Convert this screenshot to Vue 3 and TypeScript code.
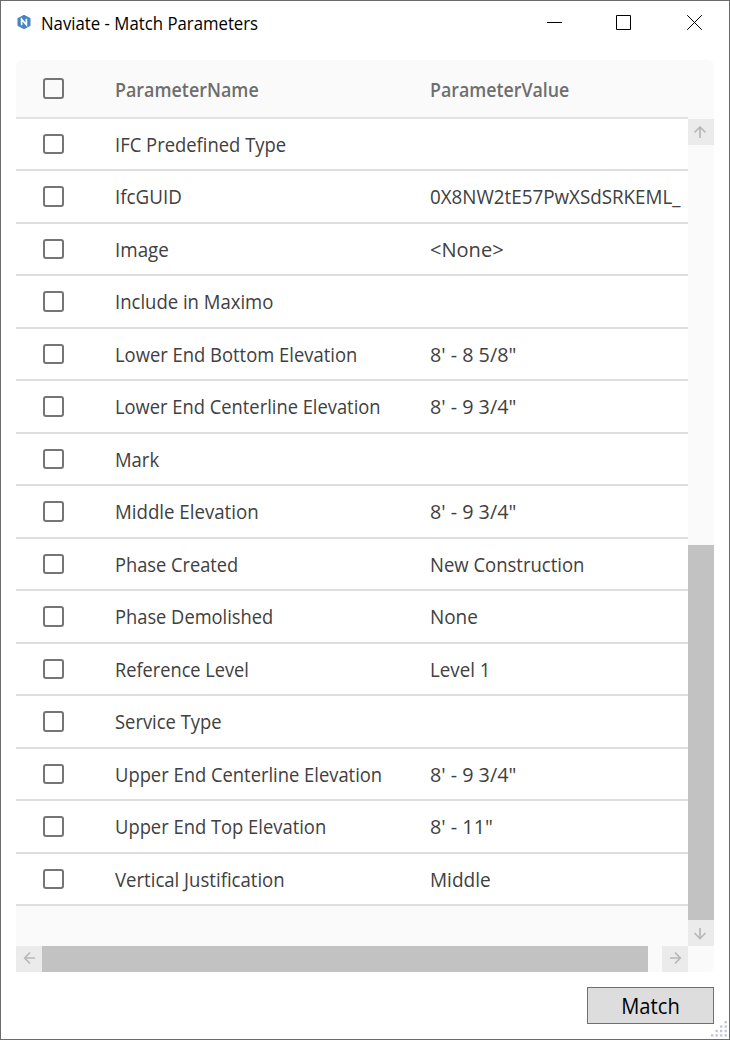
<script setup lang="ts">
import type { Directive } from 'vue'

interface Cell {
  text: string
  width: number
}

interface Row {
  name: Cell
  value?: Cell
}

const cell = (text: string, width: number): Cell => ({ text, width })

const rows: Row[] = [
  { name: cell('IFC Predefined Type', 171) },
  { name: cell('IfcGUID', 66.5), value: cell('0X8NW2tE57PwXSdSRKEML_', 250.5) },
  { name: cell('Image', 54), value: cell('<None>', 74) },
  { name: cell('Include in Maximo', 158.5) },
  { name: cell('Lower End Bottom Elevation', 242.5), value: cell('8\' - 8 5/8"', 86) },
  { name: cell('Lower End Centerline Elevation', 266), value: cell('8\' - 9 3/4"', 86) },
  { name: cell('Mark', 44.5) },
  { name: cell('Middle Elevation', 143.5), value: cell('8\' - 9 3/4"', 86) },
  { name: cell('Phase Created', 123.5), value: cell('New Construction', 154.5) },
  { name: cell('Phase Demolished', 158.5), value: cell('None', 47.5) },
  { name: cell('Reference Level', 133.5), value: cell('Level 1', 60.5) },
  { name: cell('Service Type', 106.5) },
  { name: cell('Upper End Centerline Elevation', 267.5), value: cell('8\' - 9 3/4"', 86) },
  { name: cell('Upper End Top Elevation', 211), value: cell('8\' - 11"', 63) },
  { name: cell('Vertical Justification', 169.5), value: cell('Middle', 60.5) },
]

// Dots of the resize grip: row n holds n dots, aligned right.
const grip = [1, 2, 3, 4].flatMap((count, row) =>
  Array.from({ length: count }, (_, i) => [(3 - i) * 4.5, row * 4.4]),
)

// Condenses a label horizontally to the given width.
const vFit: Directive<HTMLElement, number> = {
  mounted(el, binding) {
    const apply = () => {
      el.style.transform = `scaleX(${binding.value / el.offsetWidth})`
    }
    apply()
    document.fonts?.ready.then(apply)
  },
}
</script>

<template>
  <div class="window">
    <header class="titlebar">
      <svg class="logo" width="16" height="16" viewBox="0 0 16 16">
        <path d="M8 1.5 L13.8 4.7 V11.3 L8 14.5 L2.2 11.3 V4.7 Z" fill="#4583c4" stroke="#4583c4" stroke-width="1.4" stroke-linejoin="round" />
        <path d="M5.6 11.2 V5.3 L10.4 10.7 V4.8" fill="none" stroke="#fff" stroke-width="1.7" />
      </svg>
      <h1 class="title"><span v-fit="217" class="label">Naviate - Match Parameters</span></h1>
      <div class="controls">
        <svg width="17" height="17" viewBox="0 0 17 17"><path d="M1 8.5H16" /></svg>
        <svg width="17" height="17" viewBox="0 0 17 17"><path d="M1.5 1.5H15.5V15.5H1.5Z" /></svg>
        <svg width="17" height="17" viewBox="0 0 17 17"><path d="M1.2 1.2L15.8 15.8M15.8 1.2L1.2 15.8" /></svg>
      </div>
    </header>

    <main class="grid">
      <div class="head">
        <span class="check"></span>
        <div class="name"><span v-fit="144" class="label">ParameterName</span></div>
        <div class="value"><span v-fit="139.5" class="label">ParameterValue</span></div>
      </div>
      <div class="body">
        <div class="rows">
          <div v-for="row in rows" :key="row.name.text" class="row">
            <span class="check"></span>
            <div class="name"><span v-fit="row.name.width" class="label">{{ row.name.text }}</span></div>
            <div class="value">
              <span v-if="row.value" v-fit="row.value.width" class="label">{{ row.value.text }}</span>
            </div>
          </div>
        </div>
        <div class="vbar">
          <span class="arrow"><svg width="26" height="26" viewBox="0 0 26 26"><path d="M12 19V8M6.5 13.5L12 8L17.5 13.5" /></svg></span>
          <span class="vthumb"></span>
          <span class="arrow"><svg width="26" height="26" viewBox="0 0 26 26"><path d="M12 8V18.5M6.5 13L12 18.5L17.5 13" /></svg></span>
        </div>
      </div>
      <div class="hbar">
        <span class="arrow"><svg width="26" height="26" viewBox="0 0 26 26"><path d="M19 12H9M14 6.5L8.7 12L14 17.5" /></svg></span>
        <span class="hthumb"></span>
        <span class="arrow"><svg width="26" height="26" viewBox="0 0 26 26"><path d="M8 12H18M13 6.5L18.3 12L13 17.5" /></svg></span>
      </div>
    </main>

    <footer class="footer">
      <button class="match" type="button"><span v-fit="58.5" class="label centered">Match</span></button>
    </footer>
    <svg class="grip" width="16" height="16" viewBox="0 0 16 16">
      <rect v-for="([x, y], i) in grip" :key="i" :x="x" :y="y" width="2.4" height="2.4" />
    </svg>
  </div>
</template>

<style>
body {
  margin: 0;
  background: #fff;
}
</style>

<style scoped>
.window {
  position: relative;
  box-sizing: border-box;
  width: 730px;
  height: 1040px;
  border: 1px solid #6b6b6b;
  background: #fff;
  overflow: hidden;
  font-family: "Open Sans", "Noto Sans", sans-serif;
  font-size: 19.5px;
  line-height: 26px;
  color: #404040;
}
.label {
  display: inline-block;
  white-space: nowrap;
  transform-origin: 0 50%;
}
.centered {
  transform-origin: 50% 50%;
}
.titlebar {
  display: flex;
  height: 59px;
  padding-left: 15px;
}
.logo {
  margin-top: 13px;
}
.title {
  width: 300px;
  margin: 9px 0 0 9px;
  font-size: 18px;
  font-weight: 400;
  color: #000;
}
.controls {
  display: flex;
  margin: 13px 26px 0 auto;
}
.controls svg {
  margin-left: 54px;
  fill: none;
  stroke: #000;
  stroke-width: 1;
}
.controls svg:nth-child(2) {
  margin-left: 52px;
}
.grid {
  width: 698px;
  height: 912px;
  margin-left: 15px;
  border-radius: 6px 6px 6px 0;
  background: #fafafa;
  overflow: hidden;
}
.head,
.row {
  display: flex;
  align-items: flex-start;
  box-sizing: border-box;
  width: 672px;
  padding-left: 27px;
  border-bottom: 2px solid #dedede;
}
.head {
  height: 59px;
  padding-top: 18px;
  border-color: #e3e3e3;
  font-weight: 600;
  color: #6e6e6e;
}
.row {
  height: 52px;
  padding-top: 15px;
  background: #fff;
}
.row:nth-child(even) {
  height: 53px;
}
.check {
  flex: none;
  box-sizing: border-box;
  width: 21px;
  height: 21px;
  border: 2px solid #757575;
  border-radius: 3px;
}
.row:nth-child(odd) .check {
  height: 20px;
}
.name {
  flex: none;
  width: 315px;
  margin: -2px 0 0 51px;
}
.value {
  flex: none;
  margin-top: -2px;
}
.head .name,
.head .value {
  margin-top: -1px;
}
.body {
  display: flex;
  height: 827px;
}
.rows {
  flex: none;
  width: 672px;
}
.vbar {
  display: flex;
  flex-direction: column;
  width: 26px;
}
.vthumb {
  height: 375px;
  margin-top: auto;
  background: #c2c2c2;
}
.hbar {
  display: flex;
  width: 672px;
  height: 26px;
}
.hthumb {
  width: 606px;
  margin-right: auto;
  background: #c2c2c2;
}
.arrow {
  width: 26px;
  height: 26px;
  background: #ebebeb;
}
.arrow svg {
  display: block;
  fill: none;
  stroke: #b8b8b8;
  stroke-width: 1.7;
}
.footer {
  display: flex;
  justify-content: flex-end;
  padding: 15px 15px 0 0;
}
.match {
  box-sizing: border-box;
  width: 127px;
  height: 37px;
  padding: 1px 0 0;
  border: 1px solid #707070;
  background: #ddd;
  color: #000;
  font: 21px/28px "Open Sans", "Noto Sans", sans-serif;
}
.grip {
  position: absolute;
  right: 2px;
  bottom: 2px;
  fill: #c3c8d8;
}
</style>
